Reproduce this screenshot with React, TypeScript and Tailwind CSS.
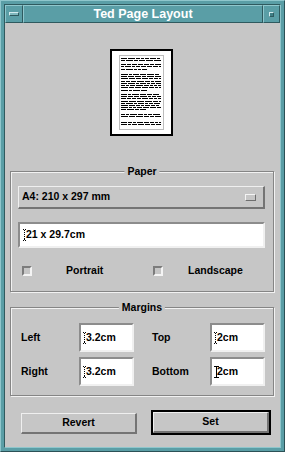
import React from "react";

const raised =
  "border-t border-l border-t-[#efefef] border-l-[#efefef] border-b-2 border-r-2 border-b-[#747474] border-r-[#747474]";
const sunken =
  "border-2 border-t-[#8c8c8c] border-l-[#8c8c8c] border-b-[#f0f0f0] border-r-[#f0f0f0]";

// row offsets of the tiny page preview, grouped by paragraph
const paragraphs = [
  [2, 4],
  [8, 10, 13],
  [18, 20, 22, 25, 27, 29, 31, 34],
  [38, 40, 42, 45, 47, 49, 51, 53],
  [58, 60],
  [66, 68],
];

function PagePreview() {
  let seed = 11;
  const rnd = () => {
    seed = (seed * 9301 + 49297) % 233280;
    return seed / 233280;
  };
  const rects: React.ReactNode[] = [];
  paragraphs.forEach((rows, pi) => {
    rows.forEach((y, ri) => {
      const last = ri === rows.length - 1 && rows.length > 2;
      const limit = last ? 18 + Math.floor(rnd() * 10) : 41;
      let x = 1;
      while (x < limit) {
        let w = 3 + Math.floor(rnd() * 5);
        if (x + w > 41) w = 41 - x;
        if (w < 2) break;
        rects.push(<rect key={`${pi}-${ri}-${x}`} x={x} y={y} width={w} height={1} fill="#000" />);
        x += w + 1;
      }
    });
  });
  return (
    <svg width="43" height="73" viewBox="0 0 43 73" shapeRendering="crispEdges">
      {rects}
    </svg>
  );
}

function DottedCursor() {
  return (
    <svg width="5" height="12" viewBox="0 0 5 12" shapeRendering="crispEdges" className="shrink-0">
      <rect x="0" y="0" width="1" height="1" fill="#000" />
      <rect x="2" y="0" width="1" height="1" fill="#000" />
      <rect x="1" y="1" width="1" height="1" fill="#000" />
      <rect x="1" y="3" width="1" height="1" fill="#000" />
      <rect x="1" y="5" width="1" height="1" fill="#000" />
      <rect x="1" y="7" width="1" height="1" fill="#000" />
      <rect x="1" y="9" width="1" height="1" fill="#000" />
      <rect x="0" y="11" width="1" height="1" fill="#000" />
      <rect x="2" y="11" width="1" height="1" fill="#000" />
      <rect x="1" y="10" width="1" height="1" fill="#000" />
    </svg>
  );
}

function IBeam() {
  return (
    <svg width="6" height="12" viewBox="0 0 6 12" shapeRendering="crispEdges" className="shrink-0">
      <rect x="0" y="0" width="5" height="1" fill="#000" />
      <rect x="2" y="0" width="1" height="12" fill="#000" />
      <rect x="0" y="11" width="5" height="1" fill="#000" />
    </svg>
  );
}

function Frame({ label, h, children }: { label: string; h: string; children: React.ReactNode }) {
  return (
    <div
      className={`relative ml-[5px] w-[264px] ${h} border border-[#858585] shadow-[1px_1px_0_#f2f2f2,inset_1px_1px_0_#f2f2f2]`}
    >
      <span className="absolute left-1/2 -top-[8px] -translate-x-1/2 bg-[#c6c6c6] px-[3px] leading-[14px]">
        {label}
      </span>
      {children}
    </div>
  );
}

function Field({ value, mouse }: { value: string; mouse?: boolean }) {
  return (
    <div className={`flex h-[29px] w-[55px] items-center bg-white pl-[2px] ${sunken}`}>
      {mouse ? <IBeam /> : <DottedCursor />}
      <span className={mouse ? "-ml-[3px]" : "-ml-[2px]"}>{value}</span>
    </div>
  );
}

function Toggle({ label }: { label: string }) {
  return (
    <>
      <div className="h-[10px] w-[10px] shrink-0 border-2 border-t-[#7c7c7c] border-l-[#7c7c7c] border-b-[#f4f4f4] border-r-[#f4f4f4] bg-[#c6c6c6]" />
      <span>{label}</span>
    </>
  );
}

export default function App() {
  return (
    <div className="h-[452px] w-[285px] border border-t-[#8fc6cc] border-l-[#8fc6cc] border-b-[#2c5156] border-r-[#2c5156] bg-[#5a9ea6] p-[3px] font-['Liberation_Sans',Arial,sans-serif] font-bold">
      <div className="flex h-[444px] flex-col border border-t-[#2f5a5f] border-l-[#2f5a5f] border-b-[#8fc6cc] border-r-[#8fc6cc]">
        {/* title bar */}
        <div className="flex h-[18px] shrink-0">
          <div className="flex w-[18px] items-center justify-center border border-t-[#90c7cd] border-l-[#90c7cd] border-b-[#2f5a5f] border-r-[#2f5a5f]">
            <div className="h-[4px] w-[10px] border border-t-[#d4ecef] border-l-[#d4ecef] border-b-[#2f5a5f] border-r-[#2f5a5f] bg-[#7fb8be]" />
          </div>
          <div className="flex flex-1 items-center justify-center border border-t-[#90c7cd] border-l-[#90c7cd] border-b-[#2f5a5f] border-r-[#2f5a5f] text-[12.5px] leading-none text-white">
            Ted Page Layout
          </div>
          <div className="flex w-[17px] items-center justify-center border border-t-[#90c7cd] border-l-[#90c7cd] border-b-[#2f5a5f] border-r-[#2f5a5f]">
            <div className="h-[5px] w-[5px] border border-t-[#d4ecef] border-l-[#d4ecef] border-b-[#2f5a5f] border-r-[#2f5a5f] bg-[#3f7e86]" />
          </div>
        </div>

        {/* body */}
        <div className="flex flex-1 flex-col bg-[#c6c6c6] text-[10.5px] text-black">
          <div className="pl-[105px] pt-[26px]">
            <div className="h-[87px] w-[63px] border-2 border-black bg-white pl-[7px] pt-[4px]">
              <div className="h-[75px] w-[45px] border border-[#bdbdbd]">
                <PagePreview />
              </div>
            </div>
          </div>

          <div className="mt-[35px]">
            <Frame label="Paper" h="h-[121px]">
              <div className="pl-[7px] pt-[14px]">
                <div className={`flex h-[23px] w-[247px] items-center justify-between bg-[#c6c6c6] pl-[3px] pr-[7px] ${raised}`}>
                  <span>A4: 210 x 297 mm</span>
                  <div className="h-[7px] w-[11px] border border-t-[#f4f4f4] border-l-[#f4f4f4] border-b-[#6e6e6e] border-r-[#6e6e6e] bg-[#c6c6c6]" />
                </div>
                <div className={`mt-[13px] flex h-[26px] w-[247px] items-center bg-white pl-[3px] ${sunken}`}>
                  <DottedCursor />
                  <span className="-ml-[2px]">21 x 29.7cm</span>
                </div>
                <div className="mt-[14px] flex h-[17px] items-center">
                  <div className="flex w-[135px] items-center gap-[34px] pl-[4px]">
                    <Toggle label="Portrait" />
                  </div>
                  <div className="flex items-center gap-[25px]">
                    <Toggle label="Landscape" />
                  </div>
                </div>
              </div>
            </Frame>
          </div>

          <div className="mt-[15px]">
            <Frame label="Margins" h="h-[89px]">
              <div className="grid grid-cols-[58px_55px_18px_58px_55px] gap-y-[5px] pl-[10px] pt-[15px]">
                <div className="flex items-center">Left</div>
                <Field value="3.2cm" />
                <div />
                <div className="flex items-center">Top</div>
                <Field value="2cm" />
                <div className="flex items-center">Right</div>
                <Field value="3.2cm" />
                <div />
                <div className="flex items-center">Bottom</div>
                <Field value="2cm" mouse />
              </div>
            </Frame>
          </div>

          <div className="mt-[14px] flex items-center">
            <button className={`ml-[16px] mt-[2px] h-[21px] w-[116px] bg-[#c6c6c6] font-bold ${raised}`}>Revert</button>
            <div className="ml-[14px] h-[25px] w-[120px] border-2 border-black">
              <button className={`h-[21px] w-[116px] bg-[#c6c6c6] font-bold ${raised}`}>Set</button>
            </div>
          </div>
        </div>
      </div>
    </div>
  );
}
